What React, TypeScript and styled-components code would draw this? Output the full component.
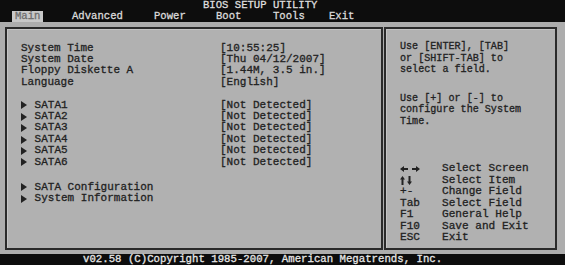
import React from 'react';
import styled, { createGlobalStyle } from 'styled-components';

const Global = createGlobalStyle`
  html, body { margin: 0; padding: 0; background: #0d0d0d; }
  body { width: 565px; height: 265px; overflow: hidden; }
`;

const Screen = styled.div`
  width: 565px;
  height: 265px;
  display: flex;
  flex-direction: column;
  font-family: "Liberation Mono", "Courier New", monospace;
  -webkit-text-stroke: 0.3px currentColor;
  background: #0d0d0d;
`;

const Header = styled.header`
  height: 22px;
  display: flex;
  flex-direction: column;
  color: #dedede;
  font-size: 10.6px;
`;

const Title = styled.div`
  height: 11px;
  line-height: 10px;
  padding-left: 203px;
  white-space: pre;
`;

const Tabs = styled.nav`
  height: 11px;
  display: grid;
  grid-template-columns: 57px 82px 62px 57px 56px 1fr;
  padding-left: 12px;
`;

const Tab = styled.div<{ $active?: boolean }>`
  justify-self: start;
  padding: 0 3px;
  line-height: 11px;
  background: ${(p) => (p.$active ? '#c8c8c8' : 'transparent')};
  color: ${(p) => (p.$active ? '#6e6e6e' : '#dadada')};
`;

const Body = styled.main`
  flex: 1;
  display: flex;
  gap: 1px;
  padding: 5px 8px 4px 5px;
  background: #adadad;
`;

const Panel = styled.section<{ $width?: number }>`
  ${(p) => (p.$width ? `width: ${p.$width}px;` : 'flex: 1;')}
  box-sizing: border-box;
  border: 2px solid #2a2a2a;
  box-shadow: inset 1px 1px 0 #c4c4c4;
  background: #b1b1b1;
  color: #222222;
  display: flex;
  flex-direction: column;
`;

const Settings = styled.div`
  display: grid;
  grid-template-columns: 199px 1fr;
  padding: 13.6px 0 0 14px;
  font-size: 11px;
  line-height: 11.4px;
  white-space: pre;
`;

const Spacer = styled.div<{ $h: number }>`
  grid-column: 1 / -1;
  height: ${(p) => p.$h}px;
`;

const Label = styled.div`
  display: flex;
  align-items: center;
`;

const Value = styled.div``;

const Pointer = styled.span`
  display: inline-flex;
  align-items: center;
  width: 13.6px;
  height: 11.4px;
  &::before {
    content: '';
    width: 0;
    height: 0;
    border-left: 6px solid #222222;
    border-top: 4px solid transparent;
    border-bottom: 4px solid transparent;
  }
`;

const HelpText = styled.div`
  padding: 12px 0 0 14px;
  font-size: 10.1px;
  line-height: 11.5px;
  white-space: pre;
`;

const Para = styled.p<{ $gap?: number }>`
  margin: ${(p) => p.$gap ?? 0}px 0 0 0;
`;

const Keys = styled.div`
  margin-top: auto;
  padding: 0 0 4.6px 14px;
  display: grid;
  grid-template-columns: 42px 1fr;
  font-size: 11.1px;
  line-height: 11.45px;
  white-space: pre;
`;

const Key = styled.div`
  display: flex;
  align-items: center;
  height: 11.45px;
`;

const Desc = styled.div``;

const Footer = styled.footer`
  height: 11px;
  line-height: 11px;
  padding-left: 83px;
  font-size: 10.7px;
  color: #e6e6e6;
  white-space: pre;
`;

const LeftRight = () => (
  <svg width="20" height="6" viewBox="0 0 20 6">
    <path d="M0 3 L4 0 L4 2 L8 2 L8 4 L4 4 L4 6 Z" fill="#222222" />
    <path d="M20 3 L16 0 L16 2 L12 2 L12 4 L16 4 L16 6 Z" fill="#222222" />
  </svg>
);

const UpDown = () => (
  <svg width="12" height="9" viewBox="0 0 12 9">
    <path d="M2.5 0 L5 3.5 L3.5 3.5 L3.5 9 L1.5 9 L1.5 3.5 L0 3.5 Z" fill="#222222" />
    <path d="M9.5 9 L12 5.5 L10.5 5.5 L10.5 0 L8.5 0 L8.5 5.5 L7 5.5 Z" fill="#222222" />
  </svg>
);

const settings: [string, string][] = [
  ['System Time', '[10:55:25]'],
  ['System Date', '[Thu 04/12/2007]'],
  ['Floppy Diskette A', '[1.44M, 3.5 in.]'],
  ['Language', '[English]'],
];

const satas = ['SATA1', 'SATA2', 'SATA3', 'SATA4', 'SATA5', 'SATA6'];

const keys: [React.ReactNode, string][] = [
  [<LeftRight key="lr" />, 'Select Screen'],
  [<UpDown key="ud" />, 'Select Item'],
  ['+-', 'Change Field'],
  ['Tab', 'Select Field'],
  ['F1', 'General Help'],
  ['F10', 'Save and Exit'],
  ['ESC', 'Exit'],
];

export default function App() {
  return (
    <Screen>
      <Global />
      <Header>
        <Title>BIOS SETUP UTILITY</Title>
        <Tabs>
          <Tab $active>Main</Tab>
          <Tab>Advanced</Tab>
          <Tab>Power</Tab>
          <Tab>Boot</Tab>
          <Tab>Tools</Tab>
          <Tab>Exit</Tab>
        </Tabs>
      </Header>
      <Body>
        <Panel $width={378}>
          <Settings>
            {settings.map(([l, v]) => (
              <React.Fragment key={l}>
                <Label>{l}</Label>
                <Value>{v}</Value>
              </React.Fragment>
            ))}
            <Spacer $h={11.4} />
            {satas.map((s) => (
              <React.Fragment key={s}>
                <Label>
                  <Pointer />
                  {s}
                </Label>
                <Value>[Not Detected]</Value>
              </React.Fragment>
            ))}
            <Spacer $h={13.6} />
            <Label>
              <Pointer />
              SATA Configuration
            </Label>
            <Value />
            <Label>
              <Pointer />
              System Information
            </Label>
            <Value />
          </Settings>
        </Panel>
        <Panel>
          <HelpText>
            <Para>{'Use [ENTER], [TAB]\nor [SHIFT-TAB] to\nselect a field.'}</Para>
            <Para $gap={17}>{'Use [+] or [-] to\nconfigure the System\nTime.'}</Para>
          </HelpText>
          <Keys>
            {keys.map(([k, d]) => (
              <React.Fragment key={d}>
                <Key>{k}</Key>
                <Desc>{d}</Desc>
              </React.Fragment>
            ))}
          </Keys>
        </Panel>
      </Body>
      <Footer>v02.58 (C)Copyright 1985-2007, American Megatrends, Inc.</Footer>
    </Screen>
  );
}
